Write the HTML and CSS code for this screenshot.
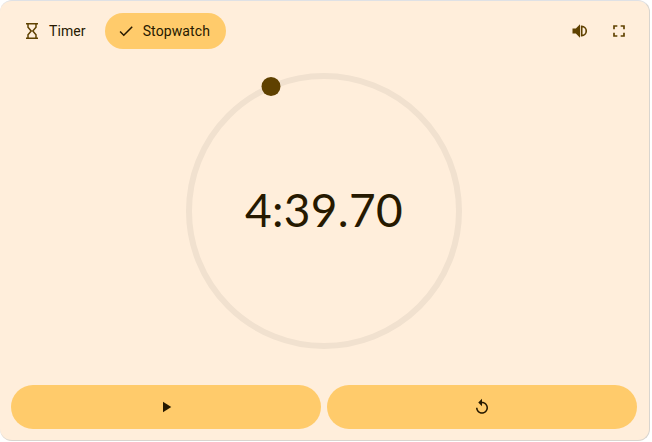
FILE: index.html
```html
<!DOCTYPE html>
<html lang="en">
<head>
    <meta charset="UTF-8" />
    <meta name="viewport" content="width=device-width, initial-scale=1.0" />
    <title>Stopwatch</title>
    <link rel="stylesheet" href="styles.css">
</head>
<body>
    <div class="card">
        <div class="top-bar">
            <div class="chips">
                <div class="chip">
                    <svg class="hourglass" viewBox="0 0 12 16"><path d="M0 .7h12M0 15.3h12M2 1v3.2L5.2 8 2 11.8V15M10 1v3.2L6.8 8l3.2 3.8V15"/></svg>
                    <span>Timer</span>
                </div>
                <div class="chip selected">
                    <svg class="chip-icon" viewBox="0 0 24 24"><path d="M9 16.17 4.83 12l-1.42 1.41L9 19 21 7l-1.41-1.41z"/></svg>
                    <span>Stopwatch</span>
                </div>
            </div>
            <div class="actions">
                <svg class="action-icon" viewBox="0 0 24 24"><path d="M3 9v6h4l5 5V4L7 9H3z"/><path class="speaker-arc" d="M14 6.5a5.5 5.5 0 0 1 0 11z"/></svg>
                <svg class="action-icon" viewBox="0 0 24 24"><path d="M7 14H5v5h5v-2H7v-3zm-2-4h2V7h3V5H5v5zm12 7h-3v2h5v-5h-2v3zM14 5v2h3v3h2V5h-5z"/></svg>
            </div>
        </div>
        <div class="dial">
            <svg class="ring" viewBox="0 0 296 296">
                <circle class="track" cx="148" cy="145" r="135" />
                <circle class="knob" cx="95" cy="20.5" r="9.5" />
            </svg>
            <div class="time">4:39.70</div>
        </div>
        <div class="controls">
            <button class="control">
                <svg viewBox="0 0 24 24"><path d="M8 5v14l11-7z"/></svg>
            </button>
            <button class="control">
                <svg viewBox="0 0 24 24"><path d="M12 5V1L7 6l5 5V7c3.31 0 6 2.69 6 6s-2.69 6-6 6-6-2.69-6-6H4c0 4.42 3.58 8 8 8s8-3.58 8-8-3.58-8-8-8z"/></svg>
            </button>
        </div>
    </div>
</body>
</html>
```

FILE: styles.css
```css
:root {
    --surface: #ffeedb;
    --accent: #ffcb6b;
    --brown: #5f4100;
    --text: #261900;
    --line: #dfe1e5;
}

html, body {
    height: 100%;
}

body {
    margin: 0;
    background-color: white;
    font-family: Roboto, Arial, sans-serif;
    color: var(--text);
}

.card {
    box-sizing: border-box;
    width: 650px;
    height: 441px;
    background-color: var(--surface);
    border-top: 1px solid var(--line);
    border-right: 1px solid #d9d5cf;
    border-bottom: 1px solid #d9d5cf;
    border-radius: 12px;
    padding: 12px 12px 11px 11px;
    display: flex;
    flex-direction: column;
}

.top-bar {
    display: flex;
    justify-content: space-between;
    align-items: center;
    height: 36px;
}

.chips {
    display: flex;
    gap: 4px;
}

.chip {
    display: flex;
    align-items: center;
    gap: 8px;
    height: 36px;
    padding: 0 15px 0 12px;
    border-radius: 18px;
    font-size: 14px;
    line-height: 20px;
    letter-spacing: 0.1px;
}

.chip .hourglass {
    width: 12px;
    height: 16px;
    margin: 0 3px;
    fill: none;
    stroke: var(--brown);
    stroke-width: 1.5;
}

.chip.selected {
    background-color: var(--accent);
    padding-right: 16px;
}

.chip-icon {
    width: 18px;
    height: 18px;
    fill: var(--text);
}

.actions {
    display: flex;
    align-items: center;
    gap: 19px;
    padding-right: 8px;
}

.action-icon {
    width: 20px;
    height: 20px;
    fill: var(--brown);
}

.speaker-arc {
    fill: none;
    stroke: var(--brown);
    stroke-width: 2;
}

.dial {
    flex: 1;
    display: flex;
    align-items: center;
    justify-content: center;
    position: relative;
    padding-bottom: 14px;
}

.ring {
    position: absolute;
    left: 165px;
    top: 17px;
    width: 296px;
    height: 296px;
}

.track {
    fill: none;
    stroke: #f1e1cf;
    stroke-width: 6;
}

.knob {
    fill: var(--brown);
}

.time {
    position: relative;
    font-family: Lato, sans-serif;
    font-size: 46px;
    line-height: 60px;
    letter-spacing: 0.3px;
}

.controls {
    display: flex;
    gap: 6px;
}

.control {
    flex: 1;
    height: 44px;
    border: none;
    border-radius: 22px;
    background-color: var(--accent);
    display: flex;
    align-items: center;
    justify-content: center;
    padding: 0;
}

.control svg {
    width: 18px;
    height: 18px;
    fill: var(--text);
}
```
